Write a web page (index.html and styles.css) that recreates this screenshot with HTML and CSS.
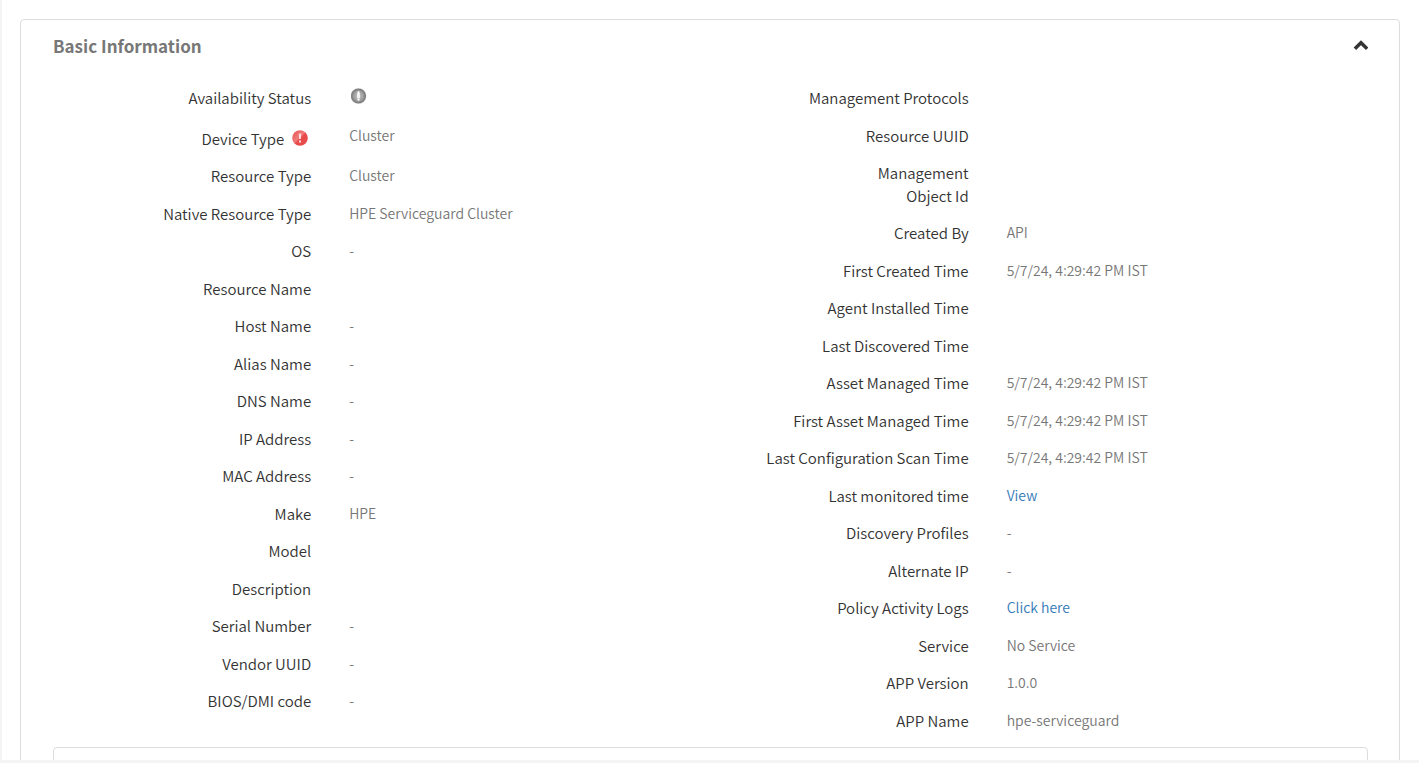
FILE: index.html
```html
<!DOCTYPE html>
<html lang="en">
<head>
    <meta charset="utf-8">
    <title>Basic Information</title>
    <link rel="stylesheet" href="styles.css">
</head>
<body>
    <main class="page">
        <section class="panel">
            <header class="panel-header">
                <h2 class="panel-title">Basic Information</h2>
                <button type="button" class="panel-toggle" aria-label="Collapse section" aria-expanded="true">
                    <svg width="16" height="16" viewBox="0 0 16 16" fill="none" stroke="#333" stroke-width="3.4">
                        <path d="M2.9 10.8 9 4.7 15.1 10.8"/>
                    </svg>
                </button>
            </header>

            <div class="details">
                <dl class="detail-list">
                    <dt>Availability Status</dt>
                    <dd>
                        <svg class="status-icon" width="16" height="16" viewBox="0 0 16 16" role="img" aria-label="Unknown">
                            <defs>
                                <radialGradient id="gray" cx="50%" cy="50%" r="50%">
                                    <stop offset="0" stop-color="#c4c4c4"/>
                                    <stop offset="0.6" stop-color="#a0a0a0"/>
                                    <stop offset="0.88" stop-color="#7c7c7c"/>
                                    <stop offset="1" stop-color="#aaa"/>
                                </radialGradient>
                            </defs>
                            <circle cx="7.5" cy="8" r="7.8" fill="url(#gray)"/>
                            <ellipse cx="7.5" cy="8" rx="1.5" ry="5" fill="#f4f4f4"/>
                            <path d="M6 10.4h3" stroke="#ccc" stroke-width="0.8"/>
                        </svg>
                    </dd>
                    <dt class="has-icon">Device Type
                        <svg class="alert-icon" width="16" height="16" viewBox="0 0 16 16" role="img" aria-label="Critical">
                            <defs>
                                <linearGradient id="red" x1="0" y1="0" x2="1" y2="1">
                                    <stop offset="0" stop-color="#e85050"/>
                                    <stop offset="0.45" stop-color="#f07c7c"/>
                                    <stop offset="0.55" stop-color="#e84848"/>
                                    <stop offset="1" stop-color="#e65050"/>
                                </linearGradient>
                            </defs>
                            <circle cx="8" cy="8" r="7.8" fill="url(#red)"/>
                            <path d="M6.8 3.4h2.4L8.9 9H7.1zM7 10.4h2v2H7z" fill="#fbdcdc"/>
                        </svg>
                    </dt>
                    <dd>Cluster</dd>
                    <dt>Resource Type</dt>
                    <dd>Cluster</dd>
                    <dt>Native Resource Type</dt>
                    <dd>HPE Serviceguard Cluster</dd>
                    <dt>OS</dt>
                    <dd>-</dd>
                    <dt>Resource Name</dt>
                    <dd></dd>
                    <dt>Host Name</dt>
                    <dd>-</dd>
                    <dt>Alias Name</dt>
                    <dd>-</dd>
                    <dt>DNS Name</dt>
                    <dd>-</dd>
                    <dt>IP Address</dt>
                    <dd>-</dd>
                    <dt>MAC Address</dt>
                    <dd>-</dd>
                    <dt>Make</dt>
                    <dd>HPE</dd>
                    <dt>Model</dt>
                    <dd></dd>
                    <dt>Description</dt>
                    <dd></dd>
                    <dt>Serial Number</dt>
                    <dd>-</dd>
                    <dt>Vendor UUID</dt>
                    <dd>-</dd>
                    <dt>BIOS/DMI code</dt>
                    <dd>-</dd>
                </dl>

                <dl class="detail-list">
                    <dt>Management Protocols</dt>
                    <dd></dd>
                    <dt>Resource UUID</dt>
                    <dd></dd>
                    <dt>Management<br>Object Id</dt>
                    <dd></dd>
                    <dt>Created By</dt>
                    <dd>API</dd>
                    <dt>First Created Time</dt>
                    <dd>5/7/24, 4:29:42 PM IST</dd>
                    <dt>Agent Installed Time</dt>
                    <dd></dd>
                    <dt>Last Discovered Time</dt>
                    <dd></dd>
                    <dt>Asset Managed Time</dt>
                    <dd>5/7/24, 4:29:42 PM IST</dd>
                    <dt>First Asset Managed Time</dt>
                    <dd>5/7/24, 4:29:42 PM IST</dd>
                    <dt>Last Configuration Scan Time</dt>
                    <dd>5/7/24, 4:29:42 PM IST</dd>
                    <dt>Last monitored time</dt>
                    <dd><a href="#">View</a></dd>
                    <dt>Discovery Profiles</dt>
                    <dd>-</dd>
                    <dt>Alternate IP</dt>
                    <dd>-</dd>
                    <dt>Policy Activity Logs</dt>
                    <dd><a href="#">Click here</a></dd>
                    <dt>Service</dt>
                    <dd>No Service</dd>
                    <dt>APP Version</dt>
                    <dd>1.0.0</dd>
                    <dt>APP Name</dt>
                    <dd>hpe-serviceguard</dd>
                </dl>
            </div>

            <div class="sub-panel"></div>
        </section>
    </main>
</body>
</html>
```
FILE: styles.css
```css
* {
    box-sizing: border-box;
}

body {
    margin: 0;
    background: #fff;
    color: #333;
    font-family: "Noto Sans CJK SC", "Noto Sans", sans-serif;
    font-size: 15px;
    line-height: 1.5;
}

.page {
    height: 100vh;
    overflow: hidden;
    padding: 19px 19px 0 18px;
    border-left: 2px solid #f4f4f4;
    border-bottom: 3px solid #f4f4f4;
}

.panel {
    padding: 12px 31px 32px 32px;
    border: 1px solid #ddd;
    border-radius: 4px;
}

.panel-header {
    display: flex;
    align-items: center;
    justify-content: space-between;
    height: 28px;
    margin-bottom: 27px;
}

.panel-title {
    margin: 0;
    font-size: 17px;
    font-weight: 700;
    color: #777;
}

.panel-toggle {
    display: flex;
    padding: 0;
    border: 0;
    background: none;
    cursor: pointer;
}

.details {
    display: grid;
    grid-template-columns: 1fr 1fr;
    align-items: start;
}

.detail-list {
    display: grid;
    grid-template-columns: 5fr 7fr;
    gap: 15px 38px;
    margin: 0 0 15px;
}

.detail-list dt {
    text-align: right;
    font-weight: 350;
}

.detail-list dd {
    margin: 0;
    font-size: 14px;
    font-weight: 350;
    color: #777;
}

.detail-list a {
    color: #337ab7;
    text-decoration: none;
}

.detail-list .has-icon {
    display: flex;
    justify-content: flex-end;
    gap: 8px;
    padding-top: 3px;
}

.status-icon {
    display: block;
    margin: 1px 2px;
}

.alert-icon {
    margin: 2px 3px 0 0;
}

.sub-panel {
    height: 120px;
    border: 1px solid #ddd;
    border-radius: 4px;
}
```
